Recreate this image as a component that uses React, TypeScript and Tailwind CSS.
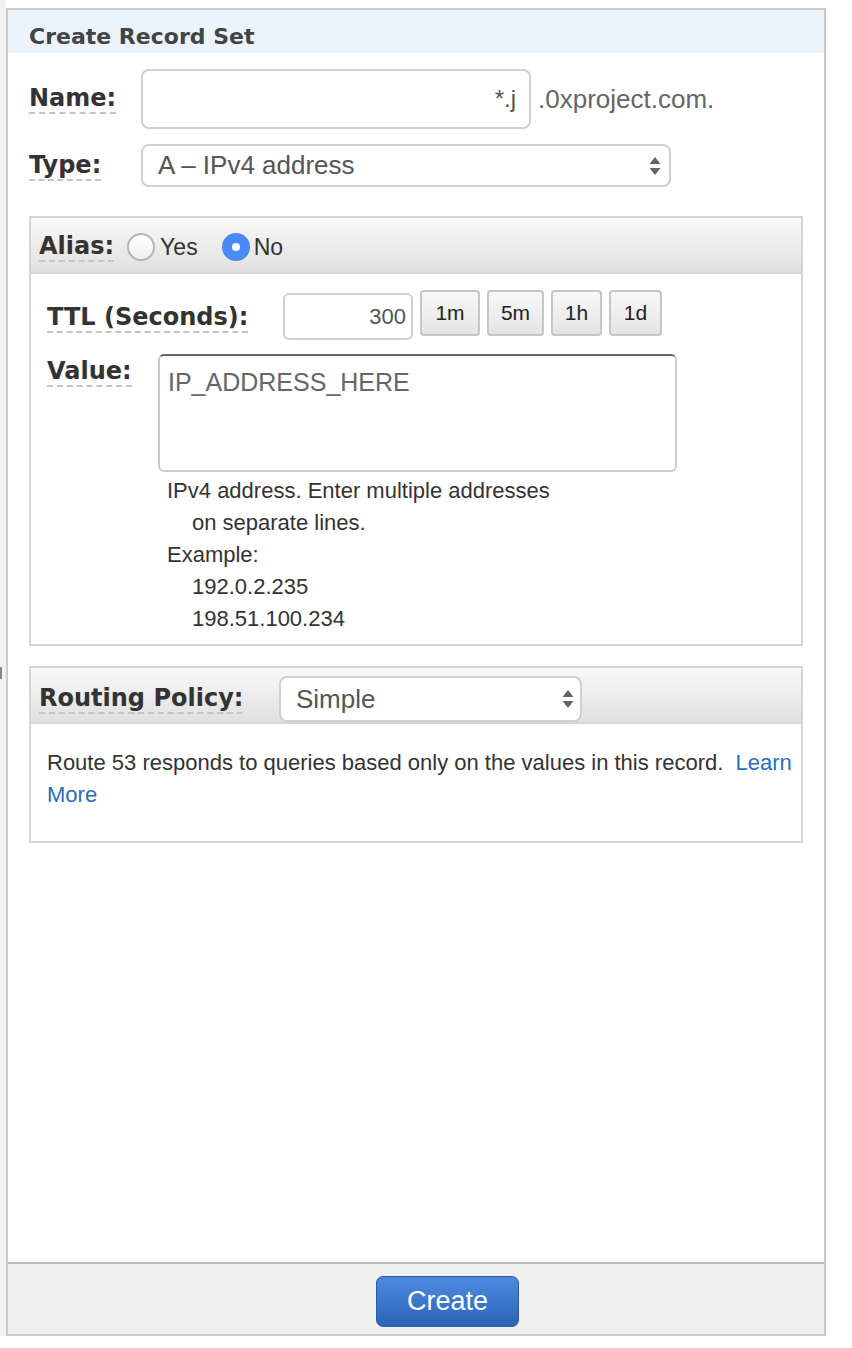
import React from 'react'

const label = "font-['DejaVu_Sans',sans-serif] font-bold text-[24px] leading-[28px] text-[#333] border-b-2 border-dashed border-[#c4c4c4]"

function Arrows() {
  return (
    <svg width="12" height="20" viewBox="0 0 12 20" className="shrink-0">
      <path d="M6 1 L11.5 8 L0.5 8 Z" fill="#666" />
      <path d="M6 19 L11.5 12 L0.5 12 Z" fill="#666" />
    </svg>
  )
}

function TtlButton({ text, w }: { text: string; w: string }) {
  return (
    <button
      className={`${w} h-[46px] rounded-[4px] border-2 border-[#c6c6c6] bg-gradient-to-b from-[#f8f8f8] to-[#e4e4e4] text-[21px] text-[#222] flex items-center justify-center`}>
      {text}
    </button>
  )
}

export default function App() {
  return (
    <div className="w-[852px] h-[1348px] bg-white flex items-start font-['Liberation_Sans',Arial,sans-serif]">
      {/* left strip */}
      <div className="w-[6px] h-[1336px] bg-[#f2f2f2] flex flex-col pt-[667px]">
        <div className="w-[2px] h-[12px] bg-[#888]" />
      </div>

      <div className="mt-[8px] w-[820px] h-[1328px] border-2 border-[#cccccc] flex flex-col">
        {/* header */}
        <div className="h-[43px] bg-[#ebf3fc] pl-[21px] pt-[15px]">
          <div className="font-['DejaVu_Sans',sans-serif] font-bold text-[22px] leading-[24px] text-[#444]">Create Record Set</div>
        </div>

        {/* body */}
        <div className="flex-1 px-[21px] pt-[16px]">
          {/* Name */}
          <div className="flex items-center">
            <div className="w-[112px] shrink-0 flex">
              <span className={label}>Name:</span>
            </div>
            <div className="w-[390px] h-[60px] rounded-[8px] border-2 border-[#d0d0d0] flex items-center justify-end pr-[13px] text-[24px] text-[#555]">
              *.j
            </div>
            <span className="ml-[7px] text-[26px] text-[#666]">.0xproject.com.</span>
          </div>

          {/* Type */}
          <div className="flex items-center mt-[15px]">
            <div className="w-[112px] shrink-0 flex">
              <span className={label}>Type:</span>
            </div>
            <div className="w-[530px] h-[43px] rounded-[8px] border-2 border-[#d0d0d0] flex items-center justify-between pl-[15px] pr-[8px] text-[26px] text-[#555]">
              <span>A – IPv4 address</span>
              <Arrows />
            </div>
          </div>

          {/* Alias box */}
          <div className="mt-[29px] border-2 border-[#d5d5d5]">
            <div className="h-[56px] bg-gradient-to-b from-[#f9f9f9] to-[#e0e0e0] border-b-2 border-[#d5d5d5] flex items-center pl-[8px] pt-[4px]">
              <span className={label}>Alias:</span>
              <span className="ml-[13px] w-[28px] h-[28px] rounded-full border-2 border-[#b5b5b5] bg-gradient-to-b from-white to-[#f2f2f2]" />
              <span className="ml-[5px] text-[23px] text-[#333]">Yes</span>
              <span className="ml-[24px] w-[28px] h-[28px] rounded-full bg-[#4a8af4] flex items-center justify-center">
                <span className="w-[8px] h-[8px] rounded-full bg-white" />
              </span>
              <span className="ml-[4px] text-[23px] text-[#333]">No</span>
            </div>

            <div className="pl-[16px] pt-[16px] pb-[9px]">
              {/* TTL */}
              <div className="flex items-center">
                <div className="w-[236px] shrink-0 flex pt-[6px]">
                  <span className={label}>TTL (Seconds):</span>
                </div>
                <div className="w-[130px] h-[47px] mt-[3px] rounded-[6px] border-2 border-[#d0d0d0] flex items-center justify-end pr-[5px] text-[22px] text-[#555]">
                  300
                </div>
                <div className="flex items-center gap-[7px] ml-[7px] self-start">
                  <TtlButton text="1m" w="w-[60px]" />
                  <TtlButton text="5m" w="w-[57px]" />
                  <TtlButton text="1h" w="w-[51px]" />
                  <TtlButton text="1d" w="w-[53px]" />
                </div>
              </div>

              {/* Value */}
              <div className="flex mt-[14px]">
                <div className="w-[111px] shrink-0 flex items-start pt-[3px]">
                  <span className={label}>Value:</span>
                </div>
                <div className="flex flex-col">
                  <div className="w-[519px] h-[118px] rounded-[6px] border-2 border-[#cccccc] border-t-[#666] pl-[8px] pt-[11px] text-[25px] leading-[30px] text-[#666]">
                    IP_ADDRESS_HERE
                  </div>
                  <div className="pl-[9px] pt-[3px] text-[22px] leading-[32px] text-[#333]">
                    <div>IPv4 address. Enter multiple addresses</div>
                    <div className="pl-[25px]">on separate lines.</div>
                    <div>Example:</div>
                    <div className="pl-[25px]">192.0.2.235</div>
                    <div className="pl-[25px]">198.51.100.234</div>
                  </div>
                </div>
              </div>
            </div>
          </div>

          {/* Routing policy box */}
          <div className="mt-[20px] border-2 border-[#d5d5d5]">
            <div className="h-[56px] bg-gradient-to-b from-[#f9f9f9] to-[#e0e0e0] border-b-2 border-[#d5d5d5] flex items-end pl-[8px]">
              <div className="w-[240px] shrink-0 flex self-center pt-[8px]">
                <span className={label}>Routing Policy:</span>
              </div>
              <div className="w-[303px] h-[46px] rounded-[8px] border-2 border-[#d0d0d0] bg-white flex items-center justify-between pl-[15px] pr-[6px] text-[26px] text-[#555]">
                <span>Simple</span>
                <Arrows />
              </div>
            </div>
            <div className="pl-[16px] pr-[8px] pt-[23px] pb-[30px] text-[22px] leading-[32px] text-[#333]">
              <span>Route 53 responds to queries based only on the values in this record.&nbsp; </span>
              <a className="text-[#2a6ebb]">Learn</a>{' '}
              <a className="text-[#2a6ebb]">More</a>
            </div>
          </div>
        </div>

        {/* footer */}
        <div className="h-[72px] border-t-2 border-[#bbbbbb] bg-[#f0f0f0] pl-[368px] pt-[12px]">
          <button className="w-[143px] h-[51px] rounded-[7px] border border-[#2a5aa5] bg-gradient-to-b from-[#4d8be0] to-[#2b63b6] text-white text-[27px] flex items-center justify-center">
            Create
          </button>
        </div>
      </div>
    </div>
  )
}
